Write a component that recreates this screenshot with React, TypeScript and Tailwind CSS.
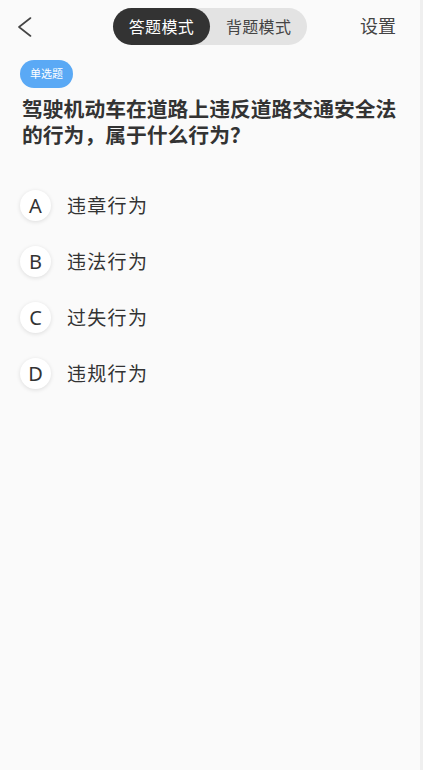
const options = [
  { key: "A", text: "违章行为" },
  { key: "B", text: "违法行为" },
  { key: "C", text: "过失行为" },
  { key: "D", text: "违规行为" },
];

const App = () => {
  return (
    <div
      className="flex w-[423px] h-[770px] bg-[#fafafa] text-[#333]"
      style={{ fontFamily: '"Noto Sans", "Noto Sans CJK SC", sans-serif' }}
    >
      <div className="flex flex-col flex-1">
        {/* 顶部栏 */}
        <div className="grid grid-cols-[1fr_auto_1fr] items-center h-[53px] px-[18px]">
          <svg width="14" height="20" viewBox="0 0 14 20" fill="none" className="mt-[1px]">
            <path d="M12.5 1 L1 10 L12.5 19" stroke="#444" strokeWidth="1.6" strokeLinecap="round" strokeLinejoin="round" />
          </svg>
          <div className="flex items-center h-[37px] rounded-full bg-[#e3e3e3] text-[16px] tracking-[0.3px]">
            <div className="flex items-center h-full px-[16px] rounded-full bg-[#333] text-white">
              答题模式
            </div>
            <div className="flex items-center h-full pl-[16px] pr-[16px] text-[#444]">
              背题模式
            </div>
          </div>
          <p className="justify-self-end mr-[6px] text-[18px] text-[#444]">设置</p>
        </div>

        <div className="px-[20px] pt-[7px]">
          <span className="inline-flex items-center h-[28px] px-[10px] rounded-full bg-[#5aa9f5] text-white text-[11px]">
            单选题
          </span>
          <h2 className="mt-[8px] text-[20.8px] leading-[26px] font-bold text-[#333] pl-[2px]">
            驾驶机动车在道路上违反道路交通安全法的行为，属于什么行为？
          </h2>

          <div className="flex flex-col gap-[25px] mt-[42px]">
            {options.map((o) => (
              <div key={o.key} className="flex items-center gap-[16px]">
                <div className="flex items-center justify-center w-[31px] h-[31px] rounded-full bg-white shadow-[0_1px_4px_rgba(0,0,0,0.12)] text-[20px] text-[#333]">
                  {o.key}
                </div>
                <p className="text-[19px] tracking-[1.3px] text-[#333]">{o.text}</p>
              </div>
            ))}
          </div>
        </div>
      </div>
      <div className="w-[3px] bg-[#efefef]" />
    </div>
  );
};

export default App;
